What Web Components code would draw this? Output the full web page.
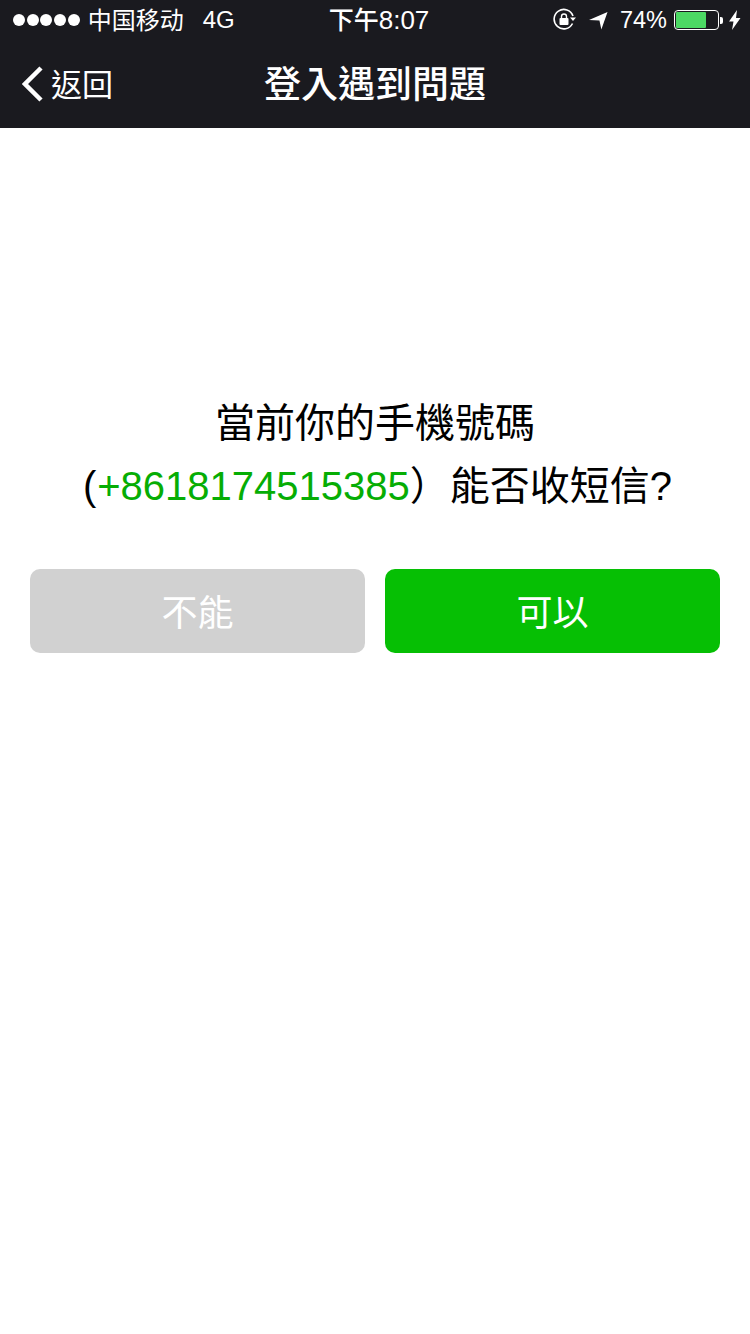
<!DOCTYPE html>
<html>
<head>
<meta charset="utf-8">
<title>登入遇到問題</title>
<style>
    html, body { margin: 0; padding: 0; background: #fff; }
    body { font-family: "Liberation Sans", "Noto Sans CJK TC", sans-serif; }
</style>
</head>
<body>
<login-page></login-page>
<script>
const FONT = '"Liberation Sans", "Noto Sans CJK TC", sans-serif';
const FONT_SC = '"Liberation Sans", "Noto Sans CJK SC", sans-serif';

class StatusBar extends HTMLElement {
    constructor() {
        super();
        this.attachShadow({ mode: 'open' });
        this.shadowRoot.innerHTML = `
            <style>
                :host {
                    display: grid;
                    grid-template-columns: 1fr auto 1fr;
                    align-items: center;
                    height: 40px;
                    padding: 0 9px 0 13px;
                    color: #fff;
                    font-family: ${FONT_SC};
                    font-size: 24px;
                }
                .left, .right { display: flex; align-items: center; }
                .right { justify-content: flex-end; }
                .dots { display: flex; gap: 1.7px; margin-right: 8px; }
                .dots i { width: 12px; height: 12px; border-radius: 50%; background: #fff; }
                .carrier { padding-bottom: 4px; }
                .net { margin-left: 19px; }
                .time { font-size: 26px; padding: 0 0 4px 4px; }
                .time span { font-size: 25px; font-weight: 500; }
                svg { display: block; }
                .pct { margin: 0 7px 0 12px; font-size: 23.5px; }
                .battery { display: flex; align-items: center; margin-right: 6px; }
                .shell {
                    box-sizing: border-box;
                    width: 45px; height: 20px;
                    border: 1.5px solid #fff;
                    border-radius: 4px;
                    padding: 1px;
                }
                .level { width: 30px; height: 100%; background: #4cd964; border-radius: 1px; }
                .nub { width: 3px; height: 7px; background: #fff; border-radius: 0 2px 2px 0; margin-left: 1px; }
            </style>
            <div class="left">
                <div class="dots"><i></i><i></i><i></i><i></i><i></i></div>
                <span class="carrier">中国移动</span><span class="net">4G</span>
            </div>
            <div class="time"><span>下午</span>8:07</div>
            <div class="right">
                <svg width="24" height="24" viewBox="0 0 24 24" fill="none" style="margin-right:12px">
                    <path d="M19.5 15.5A9.7 9.7 0 1 1 20 8" stroke="#fff" stroke-width="1.6"/>
                    <path d="M17 9.500h6l-3 3.500z" fill="#fff"/>
                    <rect x="6.500" y="10" width="9" height="7" rx="1" fill="#fff"/>
                    <path d="M8.500 10V8.500a2.500 2.500 0 0 1 5 0V10" stroke="#fff" stroke-width="1.400"/>
                </svg>
                <svg width="19" height="19" viewBox="0 0 20 20">
                    <path d="M0 9.500L19.500 1 13 19.500 11 10z" fill="#fff"/>
                </svg>
                <span class="pct">74%</span>
                <div class="battery"><div class="shell"><div class="level"></div></div><div class="nub"></div></div>
                <svg width="12" height="20" viewBox="0 0 12 20">
                    <path d="M8 0L0 11.500h4.500L3 20l8.500-12H7z" fill="#fff"/>
                </svg>
            </div>
        `;
    }
}

class NavBar extends HTMLElement {
    constructor() {
        super();
        this.attachShadow({ mode: 'open' });
        this.shadowRoot.innerHTML = `
            <style>
                :host {
                    display: grid;
                    grid-template-columns: 1fr auto 1fr;
                    align-items: center;
                    height: 88px;
                    color: #fff;
                    font-family: ${FONT};
                }
                .back { display: flex; align-items: center; padding-left: 22px; font-size: 31px; }
                .back svg { display: block; margin-right: 7px; }
                .back span { padding-bottom: 4px; }
                .title { font-size: 37px; font-weight: 500; padding-bottom: 4px; }
            </style>
            <div class="back">
                <svg width="22" height="36" viewBox="0 0 22 36" fill="none">
                    <path d="M19 2L3 18l16 16" stroke="#fff" stroke-width="4.500"/>
                </svg>
                <span>返回</span>
            </div>
            <div class="title"><slot></slot></div>
            <div></div>
        `;
    }
}

class ChoiceButton extends HTMLElement {
    constructor() {
        super();
        this.attachShadow({ mode: 'open' });
        this.shadowRoot.innerHTML = `
            <style>
                :host {
                    display: flex;
                    box-sizing: border-box;
                    align-items: center;
                    justify-content: center;
                    height: 84px;
                    padding-bottom: 2px;
                    border-radius: 10px;
                    background: #d1d1d1;
                    color: #fff;
                    font-size: 36px;
                    cursor: pointer;
                }
                :host([primary]) { background: #06bf04; }
            </style>
            <slot></slot>
        `;
    }
}

class LoginPage extends HTMLElement {
    constructor() {
        super();
        this.attachShadow({ mode: 'open' });
        this.shadowRoot.innerHTML = `
            <style>
                :host {
                    display: block;
                    min-height: 1334px;
                    background: #fff;
                    font-family: ${FONT};
                }
                header { background: #1a1a1f; }
                .msg {
                    padding-top: 264px;
                    text-align: center;
                    font-size: 40px;
                    line-height: 63px;
                    color: #000;
                }
                .line2 { padding-left: 5px; }
                .phone { color: #06ad04; margin-left: 1px; }
                .actions {
                    display: grid;
                    grid-template-columns: 1fr 1fr;
                    gap: 20px;
                    padding: 51px 30px 0;
                }
            </style>
            <header>
                <status-bar></status-bar>
                <nav-bar>登入遇到問題</nav-bar>
            </header>
            <div class="msg">
                <div>當前你的手機號碼</div>
                <div class="line2">(<span class="phone">+8618174515385</span>）能否收短信?</div>
            </div>
            <div class="actions">
                <choice-button>不能</choice-button>
                <choice-button primary>可以</choice-button>
            </div>
        `;
    }
}

customElements.define('status-bar', StatusBar);
customElements.define('nav-bar', NavBar);
customElements.define('choice-button', ChoiceButton);
customElements.define('login-page', LoginPage);
</script>
</body>
</html>
